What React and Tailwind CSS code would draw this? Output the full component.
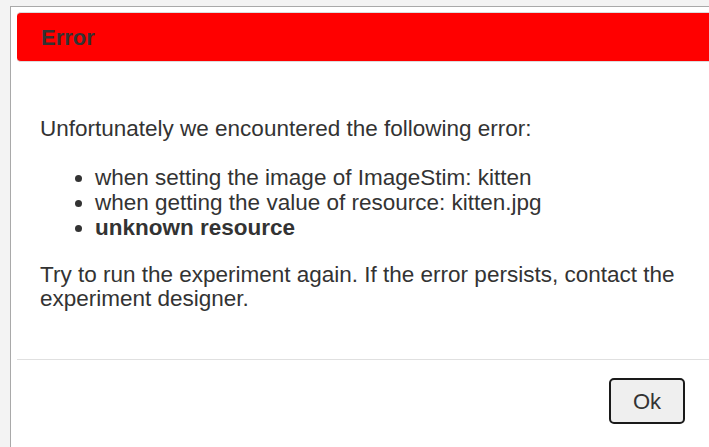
import React from 'react';

const TRACE = [
  'when setting the image of ImageStim: kitten',
  'when getting the value of resource: kitten.jpg',
];

const ErrorDialog = ({ onClose }) => {
  return (
    <div className="ml-[10px] mt-[6px] h-[441px] border-l border-t border-[#a9a9a9] bg-white pl-[6px] pt-[5px]">
      {/* Title bar */}
      <div className="flex h-[50px] items-center rounded-l-[4px] border-y border-[#dcdcdc] bg-[#ff0000] pl-[24px]">
        <span className="text-[22px] font-bold text-[#333]">Error</span>
      </div>

      {/* Message */}
      <div className="pl-[23px] pr-4 pt-[55px] text-[22.5px] leading-[24px] text-[#333]">
        <p>Unfortunately we encountered the following error:</p>
        <ul className="mt-[24px] list-disc pl-[55px]">
          {TRACE.map((line) => (
            <li key={line} className="leading-[25px]">{line}</li>
          ))}
          <li className="font-bold leading-[25px]">unknown resource</li>
        </ul>
        <p className="mt-[23px]">
          Try to run the experiment again. If the error persists, contact the experiment designer.
        </p>
      </div>

      {/* Footer */}
      <div className="mt-[48px] border-t border-[#e0e0e0] pt-[18px]">
        <div className="flex justify-end pr-[24px]">
          <button
            onClick={onClose}
            className="h-[46px] w-[76px] rounded-[5px] border-2 border-[#1a1a1a] bg-[#efefef] text-[22px] text-[#333]"
          >
            Ok
          </button>
        </div>
      </div>
    </div>
  );
};

export default function App() {
  return (
    <div
      className="h-[447px] w-[709px] overflow-hidden bg-[#f3f3f3]"
      style={{ fontFamily: '"Liberation Sans", Arial, sans-serif' }}
    >
      <ErrorDialog onClose={() => {}} />
    </div>
  );
}
